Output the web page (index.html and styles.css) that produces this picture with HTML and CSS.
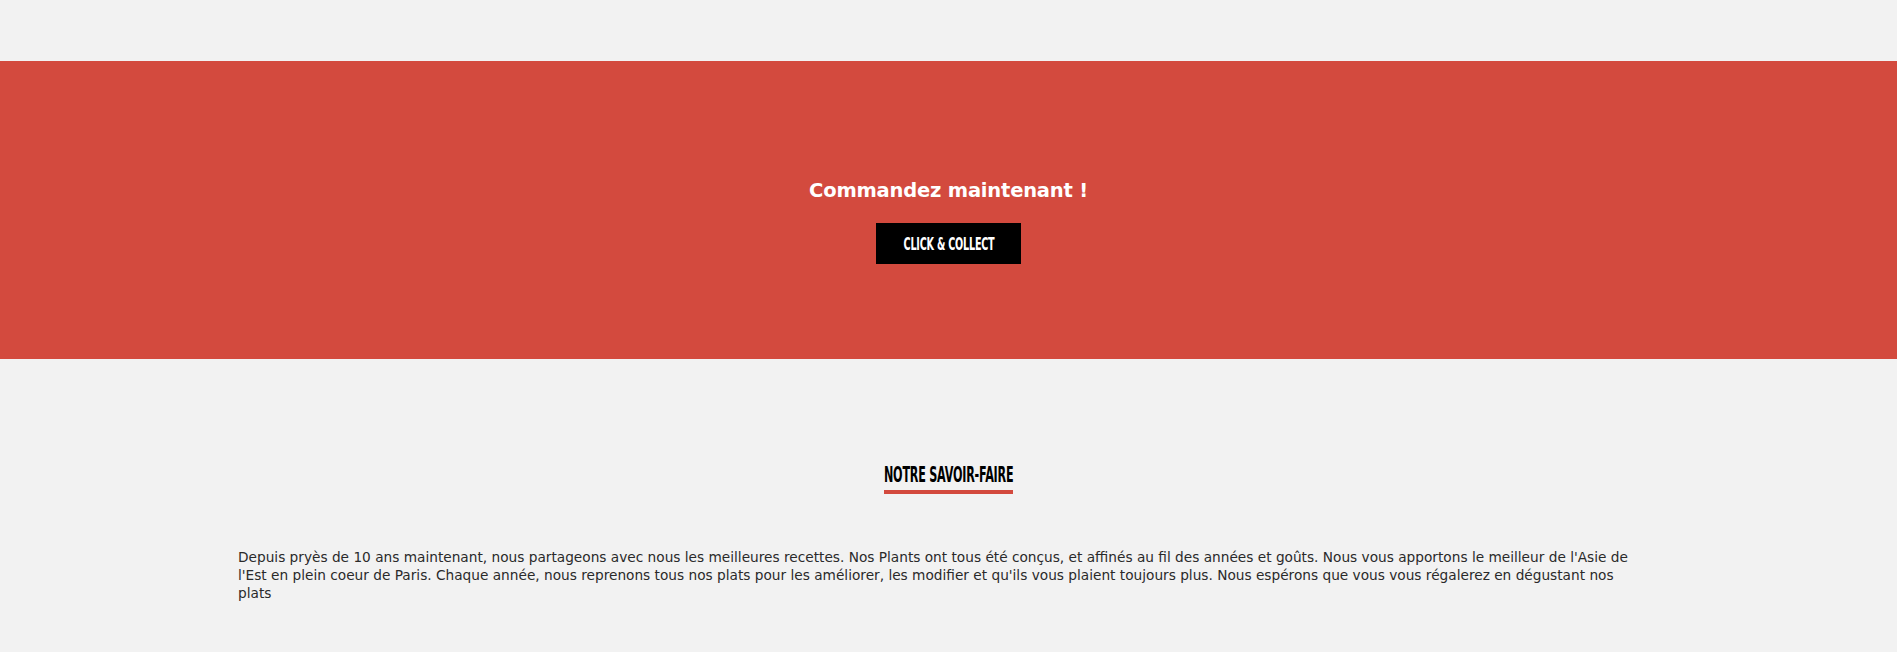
FILE: index.html
```html
<!DOCTYPE html>
<html lang="fr">
<head>
<meta charset="utf-8">
<title>Commandez maintenant</title>
<link rel="stylesheet" href="styles.css">
</head>
<body>
<div class="top-space"></div>
<section class="order">
  <h2 class="order-title">Commandez maintenant !</h2>
  <a class="order-btn" href="#"><span class="condensed btn-label">Click &amp; Collect</span></a>
</section>
<section class="savoir">
  <h3 class="savoir-title"><span class="condensed title-label">Notre savoir-faire</span></h3>
  <p class="savoir-text">Depuis pryès de 10 ans maintenant, nous partageons avec nous les meilleures recettes. Nos Plants ont tous été conçus, et affinés au fil des années et goûts. Nous vous apportons le meilleur de l'Asie de l'Est en plein coeur de Paris. Chaque année, nous reprenons tous nos plats pour les améliorer, les modifier et qu'ils vous plaient toujours plus. Nous espérons que vous vous régalerez en dégustant nos plats</p>
</section>
</body>
</html>
```
FILE: styles.css
```css
html, body {
  margin: 0;
  padding: 0;
  background: #f2f2f2;
}
body {
  font-family: "DejaVu Sans", sans-serif;
}
.top-space {
  height: 61px;
}
.order {
  background: #d34a3e;
  height: 298px;
  box-sizing: border-box;
  padding-top: 117px;
  display: flex;
  flex-direction: column;
  align-items: center;
}
.order-title {
  margin: 0;
  color: #fff;
  font-family: "DejaVu Sans", sans-serif;
  font-weight: 600;
  font-size: 19.5px;
  line-height: 26px;
  letter-spacing: -0.2px;
}
.order-btn {
  margin-top: 19px;
  width: 145px;
  height: 41px;
  background: #000;
  color: #fff;
  text-decoration: none;
  display: flex;
  align-items: center;
  justify-content: center;
}
.condensed {
  display: inline-block;
  white-space: nowrap;
  text-transform: uppercase;
  font-family: "DejaVu Sans", sans-serif;
  font-weight: 700;
}
.btn-label {
  font-size: 18px;
  line-height: 18px;
  letter-spacing: -0.4px;
  transform: scaleX(0.535);
}
.savoir {
  display: flex;
  flex-direction: column;
  align-items: center;
  padding-top: 105px;
}
.savoir-title {
  margin: 0;
  width: 129px;
  display: flex;
  justify-content: center;
  color: #000;
  padding-bottom: 4px;
  border-bottom: 4px solid #d34a3e;
}
.title-label {
  font-size: 20.5px;
  line-height: 22px;
  letter-spacing: -0.4px;
  transform: scaleX(0.545);
}
.savoir-text {
  align-self: flex-start;
  margin: 54px 0 0 238px;
  width: 1405px;
  font-family: "DejaVu Sans", sans-serif;
  font-size: 13.7px;
  line-height: 18px;
  color: #2a2a2a;
}
```
